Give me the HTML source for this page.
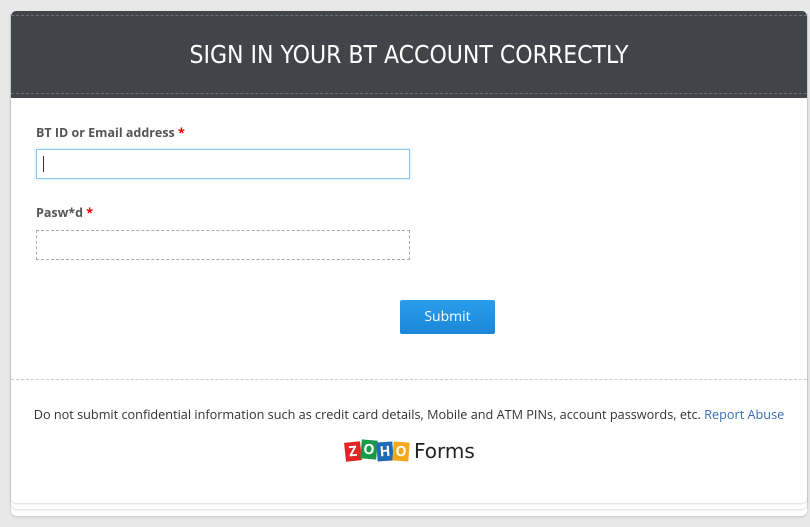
<!DOCTYPE html>
<html><head><meta charset="utf-8"><style>
*{margin:0;padding:0;box-sizing:border-box}
body{width:810px;height:527px;background:#e8e8e8;font-family:"Open Sans","DejaVu Sans","Liberation Sans",sans-serif;position:relative;overflow:hidden}
.s{position:absolute;left:11px;width:796px;background:#fff;border-radius:0 0 6px 6px;box-shadow:0 1px 2px rgba(0,0,0,.15)}
.card{position:absolute;left:11px;top:11px;width:796px;height:492px;background:#fff;border-radius:5px;box-shadow:0 1px 2px rgba(0,0,0,.15)}
.hd{height:87px;background:#414549;border-radius:5px 5px 0 0;position:relative}
.hd:before,.hd:after{content:"";position:absolute;left:0;right:0;border-top:1px dashed #6d7176}
.hd:before{top:4px}.hd:after{bottom:4px}
.hd h1{font-family:"DejaVu Sans Condensed","Liberation Sans Narrow",sans-serif;font-weight:normal;color:#fff;font-size:24.5px;text-align:center;line-height:87px}
.lb{position:absolute;left:25px;font-size:12.5px;font-weight:bold;color:#555}
.lb span{color:#e00}
.in{position:absolute;left:25px;width:374px;height:30px;background:#fff}
.btn{position:absolute;left:389px;top:289px;width:95px;height:34px;background:linear-gradient(#2b9ded,#1a86d8);border-radius:2px;color:#fff;font-size:14px;text-align:center;line-height:34px}
.sep{position:absolute;left:0;right:0;top:368px;border-top:1px dashed #ccc}
.ft{position:absolute;left:0;right:0;top:394px;text-align:center;font-size:12.7px;color:#333;white-space:nowrap}
.ft a{color:#3a6cb3;text-decoration:none}
.logo{position:absolute;left:334px;top:428px;height:24px;display:flex;align-items:center}
.z{display:inline-block;width:16px;height:19px;color:#fff;font-weight:bold;font-size:14px;text-align:center;line-height:19px;margin-right:0}
</style></head><body>
<div class="s" style="top:14px;height:502px"></div>
<div class="s" style="top:12px;height:497px"></div>
<div class="card">
<div class="hd"><h1>SIGN IN YOUR BT ACCOUNT CORRECTLY</h1></div>
<div class="lb" style="top:113px">BT ID or Email address <span>*</span></div>
<div class="in" style="top:138px;border:1px solid #90c8f0;box-shadow:0 0 3px #b5dcf7"><div style="position:absolute;left:6px;top:6px;width:1px;height:16px;background:#333"></div></div>
<div class="lb" style="top:193px">Pasw*d <span>*</span></div>
<div class="in" style="top:219px;border:1px dashed #aaa"></div>
<div class="btn">Submit</div>
<div class="sep"></div>
<div class="ft">Do not submit confidential information such as credit card details, Mobile and ATM PINs, account passwords, etc. <a>Report Abuse</a></div>
<div class="logo">
<span class="z" style="background:#e42527;transform:rotate(-6deg)">Z</span><span class="z" style="background:#1a9a48;transform:rotate(5deg);margin-top:-4px">O</span><span class="z" style="background:#1f6bb5;transform:rotate(-4deg)">H</span><span class="z" style="background:#f6a81c;transform:rotate(4deg)">O</span>
<span style="font-size:20px;color:#222;margin-left:5px;font-family:'DejaVu Sans',sans-serif">Forms</span>
</div>
</div>
</body></html>
